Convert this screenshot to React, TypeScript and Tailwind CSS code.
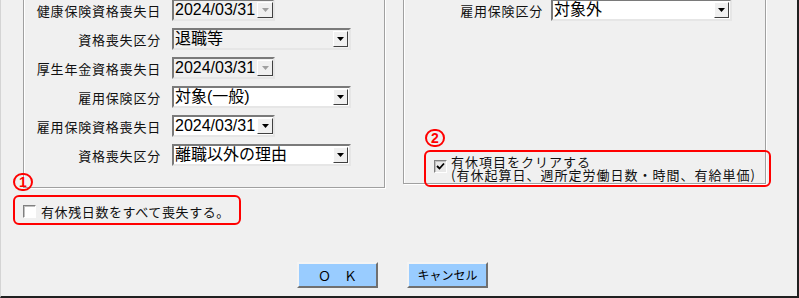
import React from "react";

const jp = "font-['Noto_Sans_CJK_JP','Noto_Sans_CJK_SC',sans-serif]";
const val = "font-['Liberation_Sans','Noto_Sans_CJK_JP',sans-serif]";

function Tri({ disabled }: { disabled?: boolean }) {
  return (
    <svg width="7" height="4" viewBox="0 0 7 4">
      <path d="M0 0 H7 L3.5 4 Z" fill={disabled ? "#a0a0a0" : "#000"} />
    </svg>
  );
}

function Field({
  value,
  width,
  disabled,
  date,
}: {
  value: string;
  width: string;
  disabled?: boolean;
  date?: boolean;
}) {
  return (
    <div
      className={`flex h-[22px] items-stretch border-2 border-t-[#7a7a7a] border-l-[#7a7a7a] border-r-[#e6e6e6] border-b-[#e6e6e6] ${width} ${
        disabled ? "bg-[#f0f0f0]" : "bg-white"
      }`}
    >
      <div className={`flex-1 flex items-center pl-[1px] text-[16px] leading-none text-black ${val} whitespace-nowrap overflow-hidden`}>
        {value}
      </div>
      <div
        className={`flex items-center justify-center bg-[#f0f0f0] border border-t-white border-l-white border-r-[#404040] border-b-[#404040] ${
          date ? "w-[16px] ml-[1px] my-[1px]" : "w-[15px] my-[1px] mr-[1px]"
        }`}
      >
        <Tri disabled={disabled && date} />
      </div>
    </div>
  );
}

function Row({
  label,
  children,
  labelW = "w-[137px]",
  gap = "ml-[11px]",
}: {
  label: string;
  children: React.ReactNode;
  labelW?: string;
  gap?: string;
}) {
  return (
    <div className="flex items-center h-[22px]">
      <div className={`${labelW} text-right text-[13px] leading-none tracking-[0.8px] text-[#111] ${jp} whitespace-nowrap`}>
        {label}
      </div>
      <div className={gap}>{children}</div>
    </div>
  );
}

function CheckBox({ checked }: { checked?: boolean }) {
  return (
    <div
      className={`w-[13px] h-[13px] shrink-0 border border-t-[#808080] border-l-[#808080] border-r-white border-b-white shadow-[inset_1px_1px_0_#c0c0c0] flex items-center justify-center ${
        checked ? "bg-[#e8e8e8]" : "bg-white"
      }`}
    >
      {checked && (
        <svg width="9" height="9" viewBox="0 0 9 9">
          <path d="M1 4 L3.5 6.5 L8 1.5" stroke="#000" strokeWidth="1.8" fill="none" />
        </svg>
      )}
    </div>
  );
}

function Badge({ n, className }: { n: string; className: string }) {
  return (
    <div
      className={`absolute w-[20px] h-[18px] rounded-full border-2 border-[#ff0000] text-[#ff0000] flex items-center justify-center text-[14px] font-bold leading-none ${val} ${className}`}
    >
      {n}
    </div>
  );
}

function Btn({ children }: { children: React.ReactNode }) {
  return (
    <div
      className={`w-[81px] h-[26px] bg-[#99ccff] border-2 border-t-[#f4f4f4] border-l-[#f4f4f4] border-r-[#707070] border-b-[#707070] flex items-center justify-center text-black leading-none ${jp}`}
    >
      {children}
    </div>
  );
}

export default function App() {
  return (
    <div className="relative w-[799px] h-[298px] overflow-hidden bg-[#f0f0f0] border-l border-l-[#d4d4d4] border-r-2 border-r-[#202020] border-b-2 border-b-[#202020] flex flex-col">
      {/* top panels */}
      <div className="flex items-start mt-[-10px] pl-[22px] gap-[18px]">
        <div className="w-[362px] h-[198px] border border-[#a0a0a0] shadow-[inset_1px_1px_0_#ffffff,1px_1px_0_#ffffff] pt-[8px] flex flex-col gap-[7px]">
          <Row label="健康保険資格喪失日">
            <Field value="2024/03/31" width="w-[103px]" disabled date />
          </Row>
          <Row label="資格喪失区分">
            <Field value="退職等" width="w-[179px]" disabled />
          </Row>
          <Row label="厚生年金資格喪失日">
            <Field value="2024/03/31" width="w-[103px]" disabled date />
          </Row>
          <Row label="雇用保険区分">
            <Field value="対象(一般)" width="w-[179px]" />
          </Row>
          <Row label="雇用保険資格喪失日">
            <Field value="2024/03/31" width="w-[103px]" date />
          </Row>
          <Row label="資格喪失区分">
            <Field value="離職以外の理由" width="w-[179px]" />
          </Row>
        </div>

        <div className="w-[363px] h-[194px] border border-[#a0a0a0] shadow-[inset_1px_1px_0_#ffffff,1px_1px_0_#ffffff] pt-[8px] flex flex-col">
          <Row label="雇用保険区分" labelW="w-[139px]" gap="ml-[8px]">
            <Field value="対象外" width="w-[181px]" />
          </Row>
          <div className="mt-auto pb-[2px] pl-[30px] flex items-start">
            <div className="mt-[5px]">
              <CheckBox checked />
            </div>
            <div className={`ml-[4px] text-[13px] leading-[13px] tracking-[1px] text-[#111] ${jp} whitespace-nowrap`}>
              <div>有休項目をクリアする</div>
              <div>(有休起算日、週所定労働日数・時間、有給単価)</div>
            </div>
          </div>
        </div>
      </div>

      {/* left checkbox */}
      <div className="mt-[16px] pl-[22px] h-[14px] flex items-center">
        <CheckBox />
        <div className={`ml-[5px] text-[13px] leading-none tracking-[0.6px] text-[#111] ${jp} whitespace-nowrap`}>
          有休残日数をすべて喪失する。
        </div>
      </div>

      {/* buttons */}
      <div className="mt-[44px] pl-[296px] flex gap-[29px]">
        <Btn>
          <span className="text-[13px]">Ｏ　Ｋ</span>
        </Btn>
        <Btn>
          <span className="text-[12px]">キャンセル</span>
        </Btn>
      </div>

      {/* annotations */}
      <Badge n="1" className="left-[12px] top-[173px]" />
      <div className="absolute left-[12px] top-[195px] w-[228px] h-[30px] border-[2.5px] border-[#ff0000] rounded-[6px]" />
      <Badge n="2" className="left-[424px] top-[129px]" />
      <div className="absolute left-[423px] top-[150px] w-[347px] h-[37px] border-[2.5px] border-[#ff0000] rounded-[6px]" />
    </div>
  );
}
